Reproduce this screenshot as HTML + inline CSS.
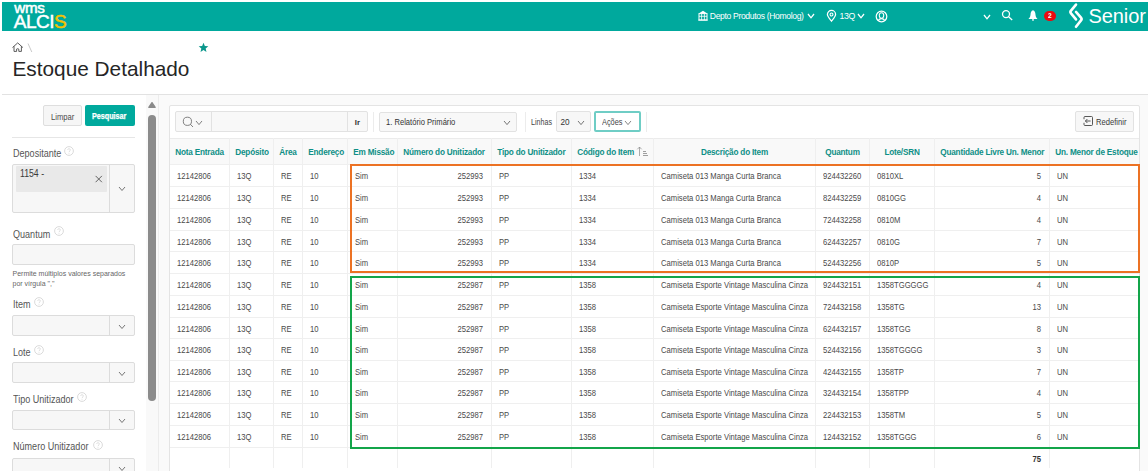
<!DOCTYPE html>
<html><head><meta charset="utf-8"><title>Estoque Detalhado</title>
<style>
*{box-sizing:border-box;margin:0;padding:0}
html,body{width:1148px;height:475px;overflow:hidden;background:#fff;font-family:"Liberation Sans",sans-serif}
body{position:relative}
.a{position:absolute}
.t{position:absolute;white-space:nowrap;line-height:1}
svg{overflow:visible}
</style></head><body>
<div class="a" style="left:2px;top:2px;width:1146px;height:29px;background:#00a99d"></div>
<div class="t" style="left:14.3px;top:-0.17px;font-size:15.2px;color:#fff;font-weight:normal;letter-spacing:-0.3px;-webkit-text-stroke:0.5px #fff">wms</div>
<div class="t" style="left:13.8px;top:12.12px;font-size:19px;color:#fff;font-weight:normal;letter-spacing:-0.5px;-webkit-text-stroke:0.5px #fff">ALCI<span style="color:#f6c200;-webkit-text-stroke:0.5px #f6c200">S</span></div>
<svg class="a" style="left:698px;top:10px" width="10" height="11" viewBox="0 0 10 11">
<path d="M5 0.8 L1.5 3 V3.6 H8.5 V3 Z" fill="#fff"/>
<rect x="1" y="3.6" width="8" height="6.4" fill="none" stroke="#fff" stroke-width="1"/>
<path d="M1 6.3 H9 M3.6 3.6 V10 M6.4 3.6 V10" stroke="#fff" stroke-width="0.8"/>
<rect x="0.3" y="9.6" width="9.4" height="1" fill="#fff"/>
</svg>
<div class="t" style="left:709.8px;top:12.42px;font-size:8.6px;color:#fff;font-weight:normal;letter-spacing:-0.35px;">Depto Produtos (Homolog)</div>
<svg class="a" style="left:807px;top:13.2px" width="8" height="5.8" viewBox="-1 -1 8 5.8"><path d="M0 0 L3.0 3.8 L6 0" fill="none" stroke="#fff" stroke-width="1.3"/></svg>
<svg class="a" style="left:826px;top:9.5px" width="11" height="12" viewBox="0 0 11 12">
<path d="M5.5 11.2 C3 8 1.4 6.2 1.4 4.5 A4.1 4.1 0 0 1 9.6 4.5 C9.6 6.2 8 8 5.5 11.2 Z" fill="none" stroke="#fff" stroke-width="1.25"/>
<circle cx="5.5" cy="4.5" r="1.45" fill="none" stroke="#fff" stroke-width="1.1"/>
</svg>
<div class="t" style="left:839.5px;top:12.35px;font-size:8.8px;color:#fff;font-weight:normal;letter-spacing:-0.4px;">13Q</div>
<svg class="a" style="left:856.5px;top:13.2px" width="8" height="5.8" viewBox="-1 -1 8 5.8"><path d="M0 0 L3.0 3.8 L6 0" fill="none" stroke="#fff" stroke-width="1.3"/></svg>
<svg class="a" style="left:874.5px;top:9.5px" width="13" height="13" viewBox="0 0 13 13">
<circle cx="6.5" cy="6.5" r="5.3" fill="none" stroke="#fff" stroke-width="1.25"/>
<path d="M6.5 2.8 C4.6 2.8 4.2 4.4 4.3 5.8 C4.4 7.2 5.3 8.3 6.5 8.3 C7.7 8.3 8.6 7.2 8.7 5.8 C8.8 4.4 8.4 2.8 6.5 2.8 Z" fill="none" stroke="#fff" stroke-width="1.1"/>
<path d="M3.2 10.4 C4 9 5 8.6 6.5 8.6 C8 8.6 9 9 9.8 10.4" fill="none" stroke="#fff" stroke-width="1.1"/>
</svg>
<svg class="a" style="left:983px;top:13.6px" width="8" height="5.8" viewBox="-1 -1 8 5.8"><path d="M0 0 L3.0 3.8 L6 0" fill="none" stroke="#fff" stroke-width="1.3"/></svg>
<svg class="a" style="left:1001px;top:9px" width="13" height="13" viewBox="0 0 13 13">
<circle cx="5" cy="5.1" r="3.5" fill="none" stroke="#fff" stroke-width="1.3"/>
<path d="M7.6 7.7 L11.2 10.9" stroke="#fff" stroke-width="1.3"/>
</svg>
<svg class="a" style="left:1028px;top:10px" width="10" height="12" viewBox="0 0 10 12">
<path d="M5 0.3 C3.4 0.9 2.6 2.4 2.5 4.8 C2.4 6.8 1.6 7.9 0.5 8.9 H9.5 C8.4 7.9 7.6 6.8 7.5 4.8 C7.4 2.4 6.6 0.9 5 0.3 Z" fill="#fff"/>
<rect x="4.3" y="9" width="1.4" height="1.8" fill="#fff"/>
</svg>
<div class="a" style="left:1044px;top:10.6px;width:12px;height:10.5px;background:#ea0a10;border-radius:6px"></div>
<div class="t" style="left:1047.6px;top:12.40px;font-size:7.8px;color:#fff;font-weight:bold;letter-spacing:0px;transform:scaleX(0.85);transform-origin:0 0;">2</div>
<svg class="a" style="left:1068px;top:3px" width="16" height="26" viewBox="0 0 16 26">
<path d="M8 1.6 L3 7.6 Q1.8 9 3 10.4 L8 16.4" fill="none" stroke="#fff" stroke-width="2.6" stroke-linecap="round"/>
<path d="M8 8.9 L13 14.6 Q14.2 16 13 17.4 L8 23.8" fill="none" stroke="#fff" stroke-width="2.6" stroke-linecap="round"/>
</svg>
<div class="t" style="left:1088.5px;top:6.37px;font-size:20px;color:#fff;font-weight:normal;letter-spacing:-0.1px;">Senior</div>
<svg class="a" style="left:12px;top:42px" width="12" height="11" viewBox="0 0 12 11">
<path d="M0.8 5.3 L5.7 0.9 L10.6 5.3" fill="none" stroke="#4a4a4a" stroke-width="0.9" stroke-linecap="round"/>
<path d="M2 4.3 V9.4 H4.6 V7.1 Q5.7 6.3 6.8 7.1 V9.4 H9.4 V4.3" fill="none" stroke="#4a4a4a" stroke-width="0.9"/>
</svg>
<svg class="a" style="left:27px;top:43px" width="6" height="10" viewBox="0 0 6 10"><path d="M1 0.5 L4.8 9" stroke="#bbb" stroke-width="0.8"/></svg>
<svg class="a" style="left:197.5px;top:41.5px" width="11" height="11" viewBox="0 0 24 24">
<path d="M12 1.5 L14.9 8.6 L22.5 9.2 L16.7 14.1 L18.5 21.6 L12 17.6 L5.5 21.6 L7.3 14.1 L1.5 9.2 L9.1 8.6 Z" fill="#0b978c"/>
</svg>
<div class="t" style="left:12.5px;top:58.69px;font-size:20.8px;color:#262626;font-weight:normal;letter-spacing:0px;">Estoque Detalhado</div>
<div class="a" style="left:2px;top:94px;width:1146px;height:1px;background:#e2e2e2"></div>
<div class="a" style="left:146px;top:95px;width:12px;height:376px;background:#f9f9f9"></div>
<div class="a" style="left:158px;top:95px;width:1px;height:376px;background:#ececec"></div>
<div class="a" style="left:159px;top:95px;width:989px;height:376px;background:#fafafa"></div>
<svg class="a" style="left:147px;top:101px" width="10" height="8" viewBox="0 0 10 8"><path d="M1.8 6.3 L5 1.6 L8.2 6.3 Z" fill="#8a8a8a" stroke="#8a8a8a" stroke-width="1.3" stroke-linejoin="round"/></svg>
<div class="a" style="left:148px;top:115px;width:8px;height:286px;background:#8b8b8b;border-radius:4px"></div>
<div class="a" style="left:43px;top:105px;width:39px;height:21px;background:#f6f6f6;border:1px solid #dedede;border-radius:2px"></div>
<div class="t" style="left:50.6px;top:112.57px;font-size:8.3px;color:#4a4a4a;font-weight:normal;letter-spacing:0px;transform:scaleX(0.92);transform-origin:0 0;">Limpar</div>
<div class="a" style="left:84.5px;top:105px;width:50.5px;height:21px;background:#00a99d;border-radius:2px"></div>
<div class="t" style="left:92.2px;top:112.19px;font-size:8.4px;color:#fff;font-weight:bold;letter-spacing:0px;transform:scaleX(0.857);transform-origin:0 0;-webkit-text-stroke:0.25px #fff">Pesquisar</div>
<div class="a" style="left:12px;top:136.5px;width:123px;height:1px;background:#e6e6e6"></div>
<div class="t" style="left:12.6px;top:148.94px;font-size:10px;color:#555555;font-weight:normal;letter-spacing:0px;transform:scaleX(0.905);transform-origin:0 0;">Depositante</div>
<svg class="a" style="left:63.8px;top:145.5px" width="10" height="10" viewBox="0 0 10 10"><circle cx="5" cy="5" r="4.4" fill="none" stroke="#d2d2d2" stroke-width="0.8"/><path d="M3.6 3.9 C3.6 2.3 6.4 2.3 6.4 3.9 C6.4 5 5 5 5 6.2" fill="none" stroke="#d2d2d2" stroke-width="0.7"/><circle cx="5" cy="7.5" r="0.45" fill="#d2d2d2"/></svg>
<div class="a" style="left:12px;top:163.5px;width:123px;height:49px;background:#f7f7f7;border:1px solid #dcdcdc;border-radius:2px"></div>
<div class="a" style="left:109px;top:164px;width:1px;height:48px;background:#dcdcdc"></div>
<div class="a" style="left:16px;top:166px;width:91px;height:25.5px;background:#e9e9e9;border-radius:1px"></div>
<div class="t" style="left:19.6px;top:168.73px;font-size:10px;color:#3a3a3a;font-weight:normal;letter-spacing:0px;transform:scaleX(0.87);transform-origin:0 0;">1154 -</div>
<svg class="a" style="left:95px;top:175px" width="8" height="8" viewBox="0 0 8 8"><path d="M0.6 0.9 L6.9 7.2 M6.9 0.9 L0.6 7.2" stroke="#555" stroke-width="0.9"/></svg>
<svg class="a" style="left:118.4px;top:186.4px" width="8" height="5.5" viewBox="-1 -1 8 5.5"><path d="M0 0 L3.0 3.5 L6 0" fill="none" stroke="#666" stroke-width="0.9"/></svg>
<div class="t" style="left:12.6px;top:229.53px;font-size:10px;color:#555555;font-weight:normal;letter-spacing:0px;transform:scaleX(0.905);transform-origin:0 0;">Quantum</div>
<svg class="a" style="left:53.6px;top:226px" width="10" height="10" viewBox="0 0 10 10"><circle cx="5" cy="5" r="4.4" fill="none" stroke="#d2d2d2" stroke-width="0.8"/><path d="M3.6 3.9 C3.6 2.3 6.4 2.3 6.4 3.9 C6.4 5 5 5 5 6.2" fill="none" stroke="#d2d2d2" stroke-width="0.7"/><circle cx="5" cy="7.5" r="0.45" fill="#d2d2d2"/></svg>
<div class="a" style="left:12px;top:244px;width:123px;height:20.5px;background:#f7f7f7;border:1px solid #dcdcdc;border-radius:2px"></div>
<div class="t" style="left:12.5px;top:269.67px;font-size:7.0px;color:#666;font-weight:normal;letter-spacing:0px;">Permite múltiplos valores separados</div>
<div class="t" style="left:12.5px;top:280.07px;font-size:7.0px;color:#666;font-weight:normal;letter-spacing:0px;">por vírgula ","</div>
<div class="t" style="left:12.6px;top:299.84px;font-size:10px;color:#555555;font-weight:normal;letter-spacing:0px;transform:scaleX(0.905);transform-origin:0 0;">Item</div>
<svg class="a" style="left:33.7px;top:297px" width="10" height="10" viewBox="0 0 10 10"><circle cx="5" cy="5" r="4.4" fill="none" stroke="#d2d2d2" stroke-width="0.8"/><path d="M3.6 3.9 C3.6 2.3 6.4 2.3 6.4 3.9 C6.4 5 5 5 5 6.2" fill="none" stroke="#d2d2d2" stroke-width="0.7"/><circle cx="5" cy="7.5" r="0.45" fill="#d2d2d2"/></svg>
<div class="a" style="left:12px;top:315px;width:123px;height:20.8px;background:#f7f7f7;border:1px solid #dcdcdc;border-radius:2px"></div><div class="a" style="left:109px;top:315.5px;width:1px;height:19.8px;background:#dcdcdc"></div><svg class="a" style="left:118.4px;top:323.8px" width="8" height="5.5" viewBox="-1 -1 8 5.5"><path d="M0 0 L3.0 3.5 L6 0" fill="none" stroke="#666" stroke-width="0.9"/></svg>
<div class="t" style="left:12.6px;top:347.84px;font-size:10px;color:#555555;font-weight:normal;letter-spacing:0px;transform:scaleX(0.905);transform-origin:0 0;">Lote</div>
<svg class="a" style="left:33.5px;top:344.5px" width="10" height="10" viewBox="0 0 10 10"><circle cx="5" cy="5" r="4.4" fill="none" stroke="#d2d2d2" stroke-width="0.8"/><path d="M3.6 3.9 C3.6 2.3 6.4 2.3 6.4 3.9 C6.4 5 5 5 5 6.2" fill="none" stroke="#d2d2d2" stroke-width="0.7"/><circle cx="5" cy="7.5" r="0.45" fill="#d2d2d2"/></svg>
<div class="a" style="left:12px;top:362px;width:123px;height:20.8px;background:#f7f7f7;border:1px solid #dcdcdc;border-radius:2px"></div><div class="a" style="left:109px;top:362.5px;width:1px;height:19.8px;background:#dcdcdc"></div><svg class="a" style="left:118.4px;top:370.8px" width="8" height="5.5" viewBox="-1 -1 8 5.5"><path d="M0 0 L3.0 3.5 L6 0" fill="none" stroke="#666" stroke-width="0.9"/></svg>
<div class="t" style="left:12.6px;top:394.54px;font-size:10px;color:#555555;font-weight:normal;letter-spacing:0px;transform:scaleX(0.905);transform-origin:0 0;">Tipo Unitizador</div>
<svg class="a" style="left:77px;top:392px" width="10" height="10" viewBox="0 0 10 10"><circle cx="5" cy="5" r="4.4" fill="none" stroke="#d2d2d2" stroke-width="0.8"/><path d="M3.6 3.9 C3.6 2.3 6.4 2.3 6.4 3.9 C6.4 5 5 5 5 6.2" fill="none" stroke="#d2d2d2" stroke-width="0.7"/><circle cx="5" cy="7.5" r="0.45" fill="#d2d2d2"/></svg>
<div class="a" style="left:12px;top:409.5px;width:123px;height:20.8px;background:#f7f7f7;border:1px solid #dcdcdc;border-radius:2px"></div><div class="a" style="left:109px;top:410.0px;width:1px;height:19.8px;background:#dcdcdc"></div><svg class="a" style="left:118.4px;top:418.3px" width="8" height="5.5" viewBox="-1 -1 8 5.5"><path d="M0 0 L3.0 3.5 L6 0" fill="none" stroke="#666" stroke-width="0.9"/></svg>
<div class="t" style="left:12.6px;top:442.14px;font-size:10px;color:#555555;font-weight:normal;letter-spacing:0px;transform:scaleX(0.905);transform-origin:0 0;">Número Unitizador</div>
<svg class="a" style="left:92.6px;top:440px" width="10" height="10" viewBox="0 0 10 10"><circle cx="5" cy="5" r="4.4" fill="none" stroke="#d2d2d2" stroke-width="0.8"/><path d="M3.6 3.9 C3.6 2.3 6.4 2.3 6.4 3.9 C6.4 5 5 5 5 6.2" fill="none" stroke="#d2d2d2" stroke-width="0.7"/><circle cx="5" cy="7.5" r="0.45" fill="#d2d2d2"/></svg>
<div class="a" style="left:12px;top:457.5px;width:123px;height:22px;background:#f7f7f7;border:1px solid #dcdcdc;border-radius:2px"></div><div class="a" style="left:109px;top:458.0px;width:1px;height:21px;background:#dcdcdc"></div><svg class="a" style="left:118.4px;top:466.3px" width="8" height="5.5" viewBox="-1 -1 8 5.5"><path d="M0 0 L3.0 3.5 L6 0" fill="none" stroke="#666" stroke-width="0.9"/></svg>
<div class="a" style="left:169px;top:105px;width:971px;height:380px;background:#fff;border:1px solid #e4e4e4;border-radius:2px"></div>
<div class="a" style="left:175px;top:111px;width:193px;height:21px;background:#f8f8f8;border:1px solid #e2e2e2;border-radius:2px"></div>
<div class="a" style="left:210.5px;top:111.5px;width:1px;height:20px;background:#e2e2e2"></div>
<div class="a" style="left:347px;top:111.5px;width:1px;height:20px;background:#e2e2e2"></div>
<svg class="a" style="left:181.5px;top:115.5px" width="13" height="13" viewBox="0 0 13 13">
<circle cx="5.4" cy="5.3" r="4.1" fill="none" stroke="#6a6a6a" stroke-width="0.85"/>
<path d="M8.3 8.2 L11 11" stroke="#6a6a6a" stroke-width="0.85"/>
</svg>
<svg class="a" style="left:194.9px;top:119.6px" width="8" height="5.6" viewBox="-1 -1 8 5.6"><path d="M0 0 L3.0 3.6 L6 0" fill="none" stroke="#6a6a6a" stroke-width="0.85"/></svg>
<div class="t" style="left:354.8px;top:118.80px;font-size:7.8px;color:#333;font-weight:bold;letter-spacing:0px;">Ir</div>
<div class="a" style="left:373px;top:112px;width:1px;height:20px;background:#ececec"></div>
<div class="a" style="left:379px;top:111.5px;width:138px;height:20px;background:#f8f8f8;border:1px solid #e2e2e2;border-radius:2px"></div>
<div class="t" style="left:385.5px;top:117.98px;font-size:9.0px;color:#333;font-weight:normal;letter-spacing:0px;transform:scaleX(0.845);transform-origin:0 0;">1. Relatório Primário</div>
<svg class="a" style="left:503px;top:120px" width="8" height="5.6" viewBox="-1 -1 8 5.6"><path d="M0 0 L3.0 3.6 L6 0" fill="none" stroke="#666" stroke-width="0.9"/></svg>
<div class="a" style="left:525px;top:112px;width:1px;height:20px;background:#ececec"></div>
<div class="t" style="left:531.2px;top:118.56px;font-size:8.2px;color:#454545;font-weight:normal;letter-spacing:0px;transform:scaleX(0.87);transform-origin:0 0;">Linhas</div>
<div class="a" style="left:555.5px;top:111.3px;width:35.5px;height:20.3px;background:#f7f7f7;border:1px solid #e2e2e2;border-radius:2px"></div>
<div class="t" style="left:560.6px;top:118.96px;font-size:8.2px;color:#333;font-weight:normal;letter-spacing:-0.2px;">20</div>
<svg class="a" style="left:577px;top:120px" width="8" height="5.6" viewBox="-1 -1 8 5.6"><path d="M0 0 L3.0 3.6 L6 0" fill="none" stroke="#666" stroke-width="0.9"/></svg>
<div class="a" style="left:593.5px;top:111px;width:47.5px;height:21.2px;background:#fff;border:2px solid #6fcdc5;border-radius:2px"></div>
<div class="t" style="left:601.5px;top:117.98px;font-size:9.0px;color:#444;font-weight:normal;letter-spacing:0px;transform:scaleX(0.82);transform-origin:0 0;">Ações</div>
<svg class="a" style="left:624.2px;top:119.6px" width="8" height="5.6" viewBox="-1 -1 8 5.6"><path d="M0 0 L3.0 3.6 L6 0" fill="none" stroke="#777" stroke-width="0.9"/></svg>
<div class="a" style="left:646px;top:112px;width:1px;height:20px;background:#ececec"></div>
<div class="a" style="left:1075px;top:111px;width:59px;height:20.6px;background:#f7f7f7;border:1px solid #e2e2e2;border-radius:2px"></div>
<svg class="a" style="left:1083px;top:116px" width="10" height="10" viewBox="0 0 10 10">
<path d="M1 3.2 V1.5 Q1 0.5 2 0.5 H8.5 Q9.5 0.5 9.5 1.5 V8.5 Q9.5 9.5 8.5 9.5 H2 Q1 9.5 1 8.5 V6.8" fill="none" stroke="#444" stroke-width="0.9"/>
<path d="M7.6 5 H2.4 M4.4 3 L2.4 5 L4.4 7" fill="none" stroke="#444" stroke-width="0.9"/>
</svg>
<div class="t" style="left:1096.0px;top:118.18px;font-size:9.0px;color:#3a3a3a;font-weight:normal;letter-spacing:0px;transform:scaleX(0.847);transform-origin:0 0;">Redefinir</div>
<div class="a" style="left:170px;top:138px;width:969px;height:26px;background:#f9f9f9"></div>
<div class="a" style="left:170px;top:138px;width:969px;height:1px;background:#ebebeb"></div>
<div class="a" style="left:170px;top:164px;width:969px;height:1px;background:#efefef"></div>
<div class="a" style="left:170px;top:186px;width:969px;height:1px;background:#efefef"></div>
<div class="a" style="left:170px;top:208px;width:969px;height:1px;background:#efefef"></div>
<div class="a" style="left:170px;top:230px;width:969px;height:1px;background:#efefef"></div>
<div class="a" style="left:170px;top:251px;width:969px;height:1px;background:#efefef"></div>
<div class="a" style="left:170px;top:273px;width:969px;height:1px;background:#efefef"></div>
<div class="a" style="left:170px;top:295px;width:969px;height:1px;background:#efefef"></div>
<div class="a" style="left:170px;top:317px;width:969px;height:1px;background:#efefef"></div>
<div class="a" style="left:170px;top:338px;width:969px;height:1px;background:#efefef"></div>
<div class="a" style="left:170px;top:360px;width:969px;height:1px;background:#efefef"></div>
<div class="a" style="left:170px;top:381px;width:969px;height:1px;background:#efefef"></div>
<div class="a" style="left:170px;top:403px;width:969px;height:1px;background:#efefef"></div>
<div class="a" style="left:170px;top:425px;width:969px;height:1px;background:#efefef"></div>
<div class="a" style="left:170px;top:447px;width:969px;height:1px;background:#efefef"></div>
<div class="a" style="left:229px;top:138px;width:1px;height:330px;background:#efefef"></div>
<div class="a" style="left:273px;top:138px;width:1px;height:330px;background:#efefef"></div>
<div class="a" style="left:302px;top:138px;width:1px;height:330px;background:#efefef"></div>
<div class="a" style="left:347px;top:138px;width:1px;height:330px;background:#efefef"></div>
<div class="a" style="left:397px;top:138px;width:1px;height:330px;background:#efefef"></div>
<div class="a" style="left:491px;top:138px;width:1px;height:330px;background:#efefef"></div>
<div class="a" style="left:571px;top:138px;width:1px;height:330px;background:#efefef"></div>
<div class="a" style="left:653px;top:138px;width:1px;height:330px;background:#efefef"></div>
<div class="a" style="left:815px;top:138px;width:1px;height:330px;background:#efefef"></div>
<div class="a" style="left:869px;top:138px;width:1px;height:330px;background:#efefef"></div>
<div class="a" style="left:934px;top:138px;width:1px;height:330px;background:#efefef"></div>
<div class="a" style="left:1049px;top:138px;width:1px;height:330px;background:#efefef"></div>
<div class="t" style="left:175.3px;top:148.66px;font-size:8.2px;color:#0e8f86;font-weight:bold;letter-spacing:-0.2px;">Nota Entrada</div>
<div class="t" style="left:235.3px;top:148.66px;font-size:8.2px;color:#0e8f86;font-weight:bold;letter-spacing:-0.2px;">Depósito</div>
<div class="t" style="left:279.3px;top:148.66px;font-size:8.2px;color:#0e8f86;font-weight:bold;letter-spacing:-0.2px;">Área</div>
<div class="t" style="left:308.3px;top:148.66px;font-size:8.2px;color:#0e8f86;font-weight:bold;letter-spacing:-0.2px;">Endereço</div>
<div class="t" style="left:353.3px;top:148.66px;font-size:8.2px;color:#0e8f86;font-weight:bold;letter-spacing:-0.2px;">Em Missão</div>
<div class="t" style="left:403.3px;top:148.66px;font-size:8.2px;color:#0e8f86;font-weight:bold;letter-spacing:-0.2px;">Número do Unitizador</div>
<div class="t" style="left:497.3px;top:148.66px;font-size:8.2px;color:#0e8f86;font-weight:bold;letter-spacing:-0.2px;">Tipo do Unitizador</div>
<div class="t" style="left:577.3px;top:148.66px;font-size:8.2px;color:#0e8f86;font-weight:bold;letter-spacing:-0.2px;">Código do Item</div>
<div class="t" style="left:584.5px;width:300px;top:148.66px;font-size:8.2px;color:#0e8f86;font-weight:bold;letter-spacing:-0.2px;text-align:center;">Descrição do Item</div>
<div class="t" style="left:692.5px;width:300px;top:148.66px;font-size:8.2px;color:#0e8f86;font-weight:bold;letter-spacing:-0.2px;text-align:center;">Quantum</div>
<div class="t" style="left:752.0px;width:300px;top:148.66px;font-size:8.2px;color:#0e8f86;font-weight:bold;letter-spacing:-0.2px;text-align:center;">Lote/SRN</div>
<div class="t" style="left:940.3px;top:148.66px;font-size:8.2px;color:#0e8f86;font-weight:bold;letter-spacing:-0.2px;">Quantidade Livre Un. Menor</div>
<div class="t" style="left:1055.3px;top:148.66px;font-size:8.2px;color:#0e8f86;font-weight:bold;letter-spacing:-0.2px;">Un. Menor de Estoque</div>
<svg class="a" style="left:636px;top:147px" width="13" height="10" viewBox="0 0 13 10">
<path d="M3.5 9 V0 M1.3 2.3 L3.5 0 L5.7 2.3" fill="none" stroke="#8a8a8a" stroke-width="0.7"/>
<path d="M7 4.5 H10 M7 6.5 H11 M7 8.5 H12" stroke="#888" stroke-width="0.8"/>
</svg>
<div class="t" style="left:177.3px;top:171.78px;font-size:9.0px;color:#4a4a4a;font-weight:normal;letter-spacing:0px;transform:scaleX(0.85);transform-origin:0 0;">12142806</div>
<div class="t" style="left:237.3px;top:171.78px;font-size:9.0px;color:#4a4a4a;font-weight:normal;letter-spacing:0px;transform:scaleX(0.85);transform-origin:0 0;">13Q</div>
<div class="t" style="left:281.3px;top:171.78px;font-size:9.0px;color:#4a4a4a;font-weight:normal;letter-spacing:0px;transform:scaleX(0.85);transform-origin:0 0;">RE</div>
<div class="t" style="left:310.3px;top:171.78px;font-size:9.0px;color:#4a4a4a;font-weight:normal;letter-spacing:0px;transform:scaleX(0.85);transform-origin:0 0;">10</div>
<div class="t" style="left:355.3px;top:171.78px;font-size:9.0px;color:#4a4a4a;font-weight:normal;letter-spacing:0px;transform:scaleX(0.85);transform-origin:0 0;">Sim</div>
<div class="t" style="right:665.0px;top:171.78px;font-size:9.0px;color:#4a4a4a;font-weight:normal;letter-spacing:0px;text-align:right;transform:scaleX(0.85);transform-origin:100% 0;">252993</div>
<div class="t" style="left:499.3px;top:171.78px;font-size:9.0px;color:#4a4a4a;font-weight:normal;letter-spacing:0px;transform:scaleX(0.85);transform-origin:0 0;">PP</div>
<div class="t" style="left:579.3px;top:171.78px;font-size:9.0px;color:#4a4a4a;font-weight:normal;letter-spacing:0px;transform:scaleX(0.85);transform-origin:0 0;">1334</div>
<div class="t" style="left:661.3px;top:171.78px;font-size:9.0px;color:#4a4a4a;font-weight:normal;letter-spacing:0px;transform:scaleX(0.85);transform-origin:0 0;">Camiseta 013 Manga Curta Branca</div>
<div class="t" style="left:823.3px;top:171.78px;font-size:9.0px;color:#4a4a4a;font-weight:normal;letter-spacing:0px;transform:scaleX(0.85);transform-origin:0 0;">924432260</div>
<div class="t" style="left:877.3px;top:171.78px;font-size:9.0px;color:#4a4a4a;font-weight:normal;letter-spacing:0px;transform:scaleX(0.85);transform-origin:0 0;">0810XL</div>
<div class="t" style="right:107.0px;top:171.78px;font-size:9.0px;color:#4a4a4a;font-weight:normal;letter-spacing:0px;text-align:right;transform:scaleX(0.85);transform-origin:100% 0;">5</div>
<div class="t" style="left:1057.3px;top:171.78px;font-size:9.0px;color:#4a4a4a;font-weight:normal;letter-spacing:0px;transform:scaleX(0.85);transform-origin:0 0;">UN</div>
<div class="t" style="left:177.3px;top:193.78px;font-size:9.0px;color:#4a4a4a;font-weight:normal;letter-spacing:0px;transform:scaleX(0.85);transform-origin:0 0;">12142806</div>
<div class="t" style="left:237.3px;top:193.78px;font-size:9.0px;color:#4a4a4a;font-weight:normal;letter-spacing:0px;transform:scaleX(0.85);transform-origin:0 0;">13Q</div>
<div class="t" style="left:281.3px;top:193.78px;font-size:9.0px;color:#4a4a4a;font-weight:normal;letter-spacing:0px;transform:scaleX(0.85);transform-origin:0 0;">RE</div>
<div class="t" style="left:310.3px;top:193.78px;font-size:9.0px;color:#4a4a4a;font-weight:normal;letter-spacing:0px;transform:scaleX(0.85);transform-origin:0 0;">10</div>
<div class="t" style="left:355.3px;top:193.78px;font-size:9.0px;color:#4a4a4a;font-weight:normal;letter-spacing:0px;transform:scaleX(0.85);transform-origin:0 0;">Sim</div>
<div class="t" style="right:665.0px;top:193.78px;font-size:9.0px;color:#4a4a4a;font-weight:normal;letter-spacing:0px;text-align:right;transform:scaleX(0.85);transform-origin:100% 0;">252993</div>
<div class="t" style="left:499.3px;top:193.78px;font-size:9.0px;color:#4a4a4a;font-weight:normal;letter-spacing:0px;transform:scaleX(0.85);transform-origin:0 0;">PP</div>
<div class="t" style="left:579.3px;top:193.78px;font-size:9.0px;color:#4a4a4a;font-weight:normal;letter-spacing:0px;transform:scaleX(0.85);transform-origin:0 0;">1334</div>
<div class="t" style="left:661.3px;top:193.78px;font-size:9.0px;color:#4a4a4a;font-weight:normal;letter-spacing:0px;transform:scaleX(0.85);transform-origin:0 0;">Camiseta 013 Manga Curta Branca</div>
<div class="t" style="left:823.3px;top:193.78px;font-size:9.0px;color:#4a4a4a;font-weight:normal;letter-spacing:0px;transform:scaleX(0.85);transform-origin:0 0;">824432259</div>
<div class="t" style="left:877.3px;top:193.78px;font-size:9.0px;color:#4a4a4a;font-weight:normal;letter-spacing:0px;transform:scaleX(0.85);transform-origin:0 0;">0810GG</div>
<div class="t" style="right:107.0px;top:193.78px;font-size:9.0px;color:#4a4a4a;font-weight:normal;letter-spacing:0px;text-align:right;transform:scaleX(0.85);transform-origin:100% 0;">4</div>
<div class="t" style="left:1057.3px;top:193.78px;font-size:9.0px;color:#4a4a4a;font-weight:normal;letter-spacing:0px;transform:scaleX(0.85);transform-origin:0 0;">UN</div>
<div class="t" style="left:177.3px;top:215.78px;font-size:9.0px;color:#4a4a4a;font-weight:normal;letter-spacing:0px;transform:scaleX(0.85);transform-origin:0 0;">12142806</div>
<div class="t" style="left:237.3px;top:215.78px;font-size:9.0px;color:#4a4a4a;font-weight:normal;letter-spacing:0px;transform:scaleX(0.85);transform-origin:0 0;">13Q</div>
<div class="t" style="left:281.3px;top:215.78px;font-size:9.0px;color:#4a4a4a;font-weight:normal;letter-spacing:0px;transform:scaleX(0.85);transform-origin:0 0;">RE</div>
<div class="t" style="left:310.3px;top:215.78px;font-size:9.0px;color:#4a4a4a;font-weight:normal;letter-spacing:0px;transform:scaleX(0.85);transform-origin:0 0;">10</div>
<div class="t" style="left:355.3px;top:215.78px;font-size:9.0px;color:#4a4a4a;font-weight:normal;letter-spacing:0px;transform:scaleX(0.85);transform-origin:0 0;">Sim</div>
<div class="t" style="right:665.0px;top:215.78px;font-size:9.0px;color:#4a4a4a;font-weight:normal;letter-spacing:0px;text-align:right;transform:scaleX(0.85);transform-origin:100% 0;">252993</div>
<div class="t" style="left:499.3px;top:215.78px;font-size:9.0px;color:#4a4a4a;font-weight:normal;letter-spacing:0px;transform:scaleX(0.85);transform-origin:0 0;">PP</div>
<div class="t" style="left:579.3px;top:215.78px;font-size:9.0px;color:#4a4a4a;font-weight:normal;letter-spacing:0px;transform:scaleX(0.85);transform-origin:0 0;">1334</div>
<div class="t" style="left:661.3px;top:215.78px;font-size:9.0px;color:#4a4a4a;font-weight:normal;letter-spacing:0px;transform:scaleX(0.85);transform-origin:0 0;">Camiseta 013 Manga Curta Branca</div>
<div class="t" style="left:823.3px;top:215.78px;font-size:9.0px;color:#4a4a4a;font-weight:normal;letter-spacing:0px;transform:scaleX(0.85);transform-origin:0 0;">724432258</div>
<div class="t" style="left:877.3px;top:215.78px;font-size:9.0px;color:#4a4a4a;font-weight:normal;letter-spacing:0px;transform:scaleX(0.85);transform-origin:0 0;">0810M</div>
<div class="t" style="right:107.0px;top:215.78px;font-size:9.0px;color:#4a4a4a;font-weight:normal;letter-spacing:0px;text-align:right;transform:scaleX(0.85);transform-origin:100% 0;">4</div>
<div class="t" style="left:1057.3px;top:215.78px;font-size:9.0px;color:#4a4a4a;font-weight:normal;letter-spacing:0px;transform:scaleX(0.85);transform-origin:0 0;">UN</div>
<div class="t" style="left:177.3px;top:237.78px;font-size:9.0px;color:#4a4a4a;font-weight:normal;letter-spacing:0px;transform:scaleX(0.85);transform-origin:0 0;">12142806</div>
<div class="t" style="left:237.3px;top:237.78px;font-size:9.0px;color:#4a4a4a;font-weight:normal;letter-spacing:0px;transform:scaleX(0.85);transform-origin:0 0;">13Q</div>
<div class="t" style="left:281.3px;top:237.78px;font-size:9.0px;color:#4a4a4a;font-weight:normal;letter-spacing:0px;transform:scaleX(0.85);transform-origin:0 0;">RE</div>
<div class="t" style="left:310.3px;top:237.78px;font-size:9.0px;color:#4a4a4a;font-weight:normal;letter-spacing:0px;transform:scaleX(0.85);transform-origin:0 0;">10</div>
<div class="t" style="left:355.3px;top:237.78px;font-size:9.0px;color:#4a4a4a;font-weight:normal;letter-spacing:0px;transform:scaleX(0.85);transform-origin:0 0;">Sim</div>
<div class="t" style="right:665.0px;top:237.78px;font-size:9.0px;color:#4a4a4a;font-weight:normal;letter-spacing:0px;text-align:right;transform:scaleX(0.85);transform-origin:100% 0;">252993</div>
<div class="t" style="left:499.3px;top:237.78px;font-size:9.0px;color:#4a4a4a;font-weight:normal;letter-spacing:0px;transform:scaleX(0.85);transform-origin:0 0;">PP</div>
<div class="t" style="left:579.3px;top:237.78px;font-size:9.0px;color:#4a4a4a;font-weight:normal;letter-spacing:0px;transform:scaleX(0.85);transform-origin:0 0;">1334</div>
<div class="t" style="left:661.3px;top:237.78px;font-size:9.0px;color:#4a4a4a;font-weight:normal;letter-spacing:0px;transform:scaleX(0.85);transform-origin:0 0;">Camiseta 013 Manga Curta Branca</div>
<div class="t" style="left:823.3px;top:237.78px;font-size:9.0px;color:#4a4a4a;font-weight:normal;letter-spacing:0px;transform:scaleX(0.85);transform-origin:0 0;">624432257</div>
<div class="t" style="left:877.3px;top:237.78px;font-size:9.0px;color:#4a4a4a;font-weight:normal;letter-spacing:0px;transform:scaleX(0.85);transform-origin:0 0;">0810G</div>
<div class="t" style="right:107.0px;top:237.78px;font-size:9.0px;color:#4a4a4a;font-weight:normal;letter-spacing:0px;text-align:right;transform:scaleX(0.85);transform-origin:100% 0;">7</div>
<div class="t" style="left:1057.3px;top:237.78px;font-size:9.0px;color:#4a4a4a;font-weight:normal;letter-spacing:0px;transform:scaleX(0.85);transform-origin:0 0;">UN</div>
<div class="t" style="left:177.3px;top:258.78px;font-size:9.0px;color:#4a4a4a;font-weight:normal;letter-spacing:0px;transform:scaleX(0.85);transform-origin:0 0;">12142806</div>
<div class="t" style="left:237.3px;top:258.78px;font-size:9.0px;color:#4a4a4a;font-weight:normal;letter-spacing:0px;transform:scaleX(0.85);transform-origin:0 0;">13Q</div>
<div class="t" style="left:281.3px;top:258.78px;font-size:9.0px;color:#4a4a4a;font-weight:normal;letter-spacing:0px;transform:scaleX(0.85);transform-origin:0 0;">RE</div>
<div class="t" style="left:310.3px;top:258.78px;font-size:9.0px;color:#4a4a4a;font-weight:normal;letter-spacing:0px;transform:scaleX(0.85);transform-origin:0 0;">10</div>
<div class="t" style="left:355.3px;top:258.78px;font-size:9.0px;color:#4a4a4a;font-weight:normal;letter-spacing:0px;transform:scaleX(0.85);transform-origin:0 0;">Sim</div>
<div class="t" style="right:665.0px;top:258.78px;font-size:9.0px;color:#4a4a4a;font-weight:normal;letter-spacing:0px;text-align:right;transform:scaleX(0.85);transform-origin:100% 0;">252993</div>
<div class="t" style="left:499.3px;top:258.78px;font-size:9.0px;color:#4a4a4a;font-weight:normal;letter-spacing:0px;transform:scaleX(0.85);transform-origin:0 0;">PP</div>
<div class="t" style="left:579.3px;top:258.78px;font-size:9.0px;color:#4a4a4a;font-weight:normal;letter-spacing:0px;transform:scaleX(0.85);transform-origin:0 0;">1334</div>
<div class="t" style="left:661.3px;top:258.78px;font-size:9.0px;color:#4a4a4a;font-weight:normal;letter-spacing:0px;transform:scaleX(0.85);transform-origin:0 0;">Camiseta 013 Manga Curta Branca</div>
<div class="t" style="left:823.3px;top:258.78px;font-size:9.0px;color:#4a4a4a;font-weight:normal;letter-spacing:0px;transform:scaleX(0.85);transform-origin:0 0;">524432256</div>
<div class="t" style="left:877.3px;top:258.78px;font-size:9.0px;color:#4a4a4a;font-weight:normal;letter-spacing:0px;transform:scaleX(0.85);transform-origin:0 0;">0810P</div>
<div class="t" style="right:107.0px;top:258.78px;font-size:9.0px;color:#4a4a4a;font-weight:normal;letter-spacing:0px;text-align:right;transform:scaleX(0.85);transform-origin:100% 0;">5</div>
<div class="t" style="left:1057.3px;top:258.78px;font-size:9.0px;color:#4a4a4a;font-weight:normal;letter-spacing:0px;transform:scaleX(0.85);transform-origin:0 0;">UN</div>
<div class="t" style="left:177.3px;top:280.78px;font-size:9.0px;color:#4a4a4a;font-weight:normal;letter-spacing:0px;transform:scaleX(0.85);transform-origin:0 0;">12142806</div>
<div class="t" style="left:237.3px;top:280.78px;font-size:9.0px;color:#4a4a4a;font-weight:normal;letter-spacing:0px;transform:scaleX(0.85);transform-origin:0 0;">13Q</div>
<div class="t" style="left:281.3px;top:280.78px;font-size:9.0px;color:#4a4a4a;font-weight:normal;letter-spacing:0px;transform:scaleX(0.85);transform-origin:0 0;">RE</div>
<div class="t" style="left:310.3px;top:280.78px;font-size:9.0px;color:#4a4a4a;font-weight:normal;letter-spacing:0px;transform:scaleX(0.85);transform-origin:0 0;">10</div>
<div class="t" style="left:355.3px;top:280.78px;font-size:9.0px;color:#4a4a4a;font-weight:normal;letter-spacing:0px;transform:scaleX(0.85);transform-origin:0 0;">Sim</div>
<div class="t" style="right:665.0px;top:280.78px;font-size:9.0px;color:#4a4a4a;font-weight:normal;letter-spacing:0px;text-align:right;transform:scaleX(0.85);transform-origin:100% 0;">252987</div>
<div class="t" style="left:499.3px;top:280.78px;font-size:9.0px;color:#4a4a4a;font-weight:normal;letter-spacing:0px;transform:scaleX(0.85);transform-origin:0 0;">PP</div>
<div class="t" style="left:579.3px;top:280.78px;font-size:9.0px;color:#4a4a4a;font-weight:normal;letter-spacing:0px;transform:scaleX(0.85);transform-origin:0 0;">1358</div>
<div class="t" style="left:661.3px;top:280.78px;font-size:9.0px;color:#4a4a4a;font-weight:normal;letter-spacing:0px;transform:scaleX(0.85);transform-origin:0 0;">Camiseta Esporte Vintage Masculina Cinza</div>
<div class="t" style="left:823.3px;top:280.78px;font-size:9.0px;color:#4a4a4a;font-weight:normal;letter-spacing:0px;transform:scaleX(0.85);transform-origin:0 0;">924432151</div>
<div class="t" style="left:877.3px;top:280.78px;font-size:9.0px;color:#4a4a4a;font-weight:normal;letter-spacing:0px;transform:scaleX(0.85);transform-origin:0 0;">1358TGGGGG</div>
<div class="t" style="right:107.0px;top:280.78px;font-size:9.0px;color:#4a4a4a;font-weight:normal;letter-spacing:0px;text-align:right;transform:scaleX(0.85);transform-origin:100% 0;">4</div>
<div class="t" style="left:1057.3px;top:280.78px;font-size:9.0px;color:#4a4a4a;font-weight:normal;letter-spacing:0px;transform:scaleX(0.85);transform-origin:0 0;">UN</div>
<div class="t" style="left:177.3px;top:302.78px;font-size:9.0px;color:#4a4a4a;font-weight:normal;letter-spacing:0px;transform:scaleX(0.85);transform-origin:0 0;">12142806</div>
<div class="t" style="left:237.3px;top:302.78px;font-size:9.0px;color:#4a4a4a;font-weight:normal;letter-spacing:0px;transform:scaleX(0.85);transform-origin:0 0;">13Q</div>
<div class="t" style="left:281.3px;top:302.78px;font-size:9.0px;color:#4a4a4a;font-weight:normal;letter-spacing:0px;transform:scaleX(0.85);transform-origin:0 0;">RE</div>
<div class="t" style="left:310.3px;top:302.78px;font-size:9.0px;color:#4a4a4a;font-weight:normal;letter-spacing:0px;transform:scaleX(0.85);transform-origin:0 0;">10</div>
<div class="t" style="left:355.3px;top:302.78px;font-size:9.0px;color:#4a4a4a;font-weight:normal;letter-spacing:0px;transform:scaleX(0.85);transform-origin:0 0;">Sim</div>
<div class="t" style="right:665.0px;top:302.78px;font-size:9.0px;color:#4a4a4a;font-weight:normal;letter-spacing:0px;text-align:right;transform:scaleX(0.85);transform-origin:100% 0;">252987</div>
<div class="t" style="left:499.3px;top:302.78px;font-size:9.0px;color:#4a4a4a;font-weight:normal;letter-spacing:0px;transform:scaleX(0.85);transform-origin:0 0;">PP</div>
<div class="t" style="left:579.3px;top:302.78px;font-size:9.0px;color:#4a4a4a;font-weight:normal;letter-spacing:0px;transform:scaleX(0.85);transform-origin:0 0;">1358</div>
<div class="t" style="left:661.3px;top:302.78px;font-size:9.0px;color:#4a4a4a;font-weight:normal;letter-spacing:0px;transform:scaleX(0.85);transform-origin:0 0;">Camiseta Esporte Vintage Masculina Cinza</div>
<div class="t" style="left:823.3px;top:302.78px;font-size:9.0px;color:#4a4a4a;font-weight:normal;letter-spacing:0px;transform:scaleX(0.85);transform-origin:0 0;">724432158</div>
<div class="t" style="left:877.3px;top:302.78px;font-size:9.0px;color:#4a4a4a;font-weight:normal;letter-spacing:0px;transform:scaleX(0.85);transform-origin:0 0;">1358TG</div>
<div class="t" style="right:107.0px;top:302.78px;font-size:9.0px;color:#4a4a4a;font-weight:normal;letter-spacing:0px;text-align:right;transform:scaleX(0.85);transform-origin:100% 0;">13</div>
<div class="t" style="left:1057.3px;top:302.78px;font-size:9.0px;color:#4a4a4a;font-weight:normal;letter-spacing:0px;transform:scaleX(0.85);transform-origin:0 0;">UN</div>
<div class="t" style="left:177.3px;top:324.78px;font-size:9.0px;color:#4a4a4a;font-weight:normal;letter-spacing:0px;transform:scaleX(0.85);transform-origin:0 0;">12142806</div>
<div class="t" style="left:237.3px;top:324.78px;font-size:9.0px;color:#4a4a4a;font-weight:normal;letter-spacing:0px;transform:scaleX(0.85);transform-origin:0 0;">13Q</div>
<div class="t" style="left:281.3px;top:324.78px;font-size:9.0px;color:#4a4a4a;font-weight:normal;letter-spacing:0px;transform:scaleX(0.85);transform-origin:0 0;">RE</div>
<div class="t" style="left:310.3px;top:324.78px;font-size:9.0px;color:#4a4a4a;font-weight:normal;letter-spacing:0px;transform:scaleX(0.85);transform-origin:0 0;">10</div>
<div class="t" style="left:355.3px;top:324.78px;font-size:9.0px;color:#4a4a4a;font-weight:normal;letter-spacing:0px;transform:scaleX(0.85);transform-origin:0 0;">Sim</div>
<div class="t" style="right:665.0px;top:324.78px;font-size:9.0px;color:#4a4a4a;font-weight:normal;letter-spacing:0px;text-align:right;transform:scaleX(0.85);transform-origin:100% 0;">252987</div>
<div class="t" style="left:499.3px;top:324.78px;font-size:9.0px;color:#4a4a4a;font-weight:normal;letter-spacing:0px;transform:scaleX(0.85);transform-origin:0 0;">PP</div>
<div class="t" style="left:579.3px;top:324.78px;font-size:9.0px;color:#4a4a4a;font-weight:normal;letter-spacing:0px;transform:scaleX(0.85);transform-origin:0 0;">1358</div>
<div class="t" style="left:661.3px;top:324.78px;font-size:9.0px;color:#4a4a4a;font-weight:normal;letter-spacing:0px;transform:scaleX(0.85);transform-origin:0 0;">Camiseta Esporte Vintage Masculina Cinza</div>
<div class="t" style="left:823.3px;top:324.78px;font-size:9.0px;color:#4a4a4a;font-weight:normal;letter-spacing:0px;transform:scaleX(0.85);transform-origin:0 0;">624432157</div>
<div class="t" style="left:877.3px;top:324.78px;font-size:9.0px;color:#4a4a4a;font-weight:normal;letter-spacing:0px;transform:scaleX(0.85);transform-origin:0 0;">1358TGG</div>
<div class="t" style="right:107.0px;top:324.78px;font-size:9.0px;color:#4a4a4a;font-weight:normal;letter-spacing:0px;text-align:right;transform:scaleX(0.85);transform-origin:100% 0;">8</div>
<div class="t" style="left:1057.3px;top:324.78px;font-size:9.0px;color:#4a4a4a;font-weight:normal;letter-spacing:0px;transform:scaleX(0.85);transform-origin:0 0;">UN</div>
<div class="t" style="left:177.3px;top:345.78px;font-size:9.0px;color:#4a4a4a;font-weight:normal;letter-spacing:0px;transform:scaleX(0.85);transform-origin:0 0;">12142806</div>
<div class="t" style="left:237.3px;top:345.78px;font-size:9.0px;color:#4a4a4a;font-weight:normal;letter-spacing:0px;transform:scaleX(0.85);transform-origin:0 0;">13Q</div>
<div class="t" style="left:281.3px;top:345.78px;font-size:9.0px;color:#4a4a4a;font-weight:normal;letter-spacing:0px;transform:scaleX(0.85);transform-origin:0 0;">RE</div>
<div class="t" style="left:310.3px;top:345.78px;font-size:9.0px;color:#4a4a4a;font-weight:normal;letter-spacing:0px;transform:scaleX(0.85);transform-origin:0 0;">10</div>
<div class="t" style="left:355.3px;top:345.78px;font-size:9.0px;color:#4a4a4a;font-weight:normal;letter-spacing:0px;transform:scaleX(0.85);transform-origin:0 0;">Sim</div>
<div class="t" style="right:665.0px;top:345.78px;font-size:9.0px;color:#4a4a4a;font-weight:normal;letter-spacing:0px;text-align:right;transform:scaleX(0.85);transform-origin:100% 0;">252987</div>
<div class="t" style="left:499.3px;top:345.78px;font-size:9.0px;color:#4a4a4a;font-weight:normal;letter-spacing:0px;transform:scaleX(0.85);transform-origin:0 0;">PP</div>
<div class="t" style="left:579.3px;top:345.78px;font-size:9.0px;color:#4a4a4a;font-weight:normal;letter-spacing:0px;transform:scaleX(0.85);transform-origin:0 0;">1358</div>
<div class="t" style="left:661.3px;top:345.78px;font-size:9.0px;color:#4a4a4a;font-weight:normal;letter-spacing:0px;transform:scaleX(0.85);transform-origin:0 0;">Camiseta Esporte Vintage Masculina Cinza</div>
<div class="t" style="left:823.3px;top:345.78px;font-size:9.0px;color:#4a4a4a;font-weight:normal;letter-spacing:0px;transform:scaleX(0.85);transform-origin:0 0;">524432156</div>
<div class="t" style="left:877.3px;top:345.78px;font-size:9.0px;color:#4a4a4a;font-weight:normal;letter-spacing:0px;transform:scaleX(0.85);transform-origin:0 0;">1358TGGGG</div>
<div class="t" style="right:107.0px;top:345.78px;font-size:9.0px;color:#4a4a4a;font-weight:normal;letter-spacing:0px;text-align:right;transform:scaleX(0.85);transform-origin:100% 0;">3</div>
<div class="t" style="left:1057.3px;top:345.78px;font-size:9.0px;color:#4a4a4a;font-weight:normal;letter-spacing:0px;transform:scaleX(0.85);transform-origin:0 0;">UN</div>
<div class="t" style="left:177.3px;top:367.78px;font-size:9.0px;color:#4a4a4a;font-weight:normal;letter-spacing:0px;transform:scaleX(0.85);transform-origin:0 0;">12142806</div>
<div class="t" style="left:237.3px;top:367.78px;font-size:9.0px;color:#4a4a4a;font-weight:normal;letter-spacing:0px;transform:scaleX(0.85);transform-origin:0 0;">13Q</div>
<div class="t" style="left:281.3px;top:367.78px;font-size:9.0px;color:#4a4a4a;font-weight:normal;letter-spacing:0px;transform:scaleX(0.85);transform-origin:0 0;">RE</div>
<div class="t" style="left:310.3px;top:367.78px;font-size:9.0px;color:#4a4a4a;font-weight:normal;letter-spacing:0px;transform:scaleX(0.85);transform-origin:0 0;">10</div>
<div class="t" style="left:355.3px;top:367.78px;font-size:9.0px;color:#4a4a4a;font-weight:normal;letter-spacing:0px;transform:scaleX(0.85);transform-origin:0 0;">Sim</div>
<div class="t" style="right:665.0px;top:367.78px;font-size:9.0px;color:#4a4a4a;font-weight:normal;letter-spacing:0px;text-align:right;transform:scaleX(0.85);transform-origin:100% 0;">252987</div>
<div class="t" style="left:499.3px;top:367.78px;font-size:9.0px;color:#4a4a4a;font-weight:normal;letter-spacing:0px;transform:scaleX(0.85);transform-origin:0 0;">PP</div>
<div class="t" style="left:579.3px;top:367.78px;font-size:9.0px;color:#4a4a4a;font-weight:normal;letter-spacing:0px;transform:scaleX(0.85);transform-origin:0 0;">1358</div>
<div class="t" style="left:661.3px;top:367.78px;font-size:9.0px;color:#4a4a4a;font-weight:normal;letter-spacing:0px;transform:scaleX(0.85);transform-origin:0 0;">Camiseta Esporte Vintage Masculina Cinza</div>
<div class="t" style="left:823.3px;top:367.78px;font-size:9.0px;color:#4a4a4a;font-weight:normal;letter-spacing:0px;transform:scaleX(0.85);transform-origin:0 0;">424432155</div>
<div class="t" style="left:877.3px;top:367.78px;font-size:9.0px;color:#4a4a4a;font-weight:normal;letter-spacing:0px;transform:scaleX(0.85);transform-origin:0 0;">1358TP</div>
<div class="t" style="right:107.0px;top:367.78px;font-size:9.0px;color:#4a4a4a;font-weight:normal;letter-spacing:0px;text-align:right;transform:scaleX(0.85);transform-origin:100% 0;">7</div>
<div class="t" style="left:1057.3px;top:367.78px;font-size:9.0px;color:#4a4a4a;font-weight:normal;letter-spacing:0px;transform:scaleX(0.85);transform-origin:0 0;">UN</div>
<div class="t" style="left:177.3px;top:388.78px;font-size:9.0px;color:#4a4a4a;font-weight:normal;letter-spacing:0px;transform:scaleX(0.85);transform-origin:0 0;">12142806</div>
<div class="t" style="left:237.3px;top:388.78px;font-size:9.0px;color:#4a4a4a;font-weight:normal;letter-spacing:0px;transform:scaleX(0.85);transform-origin:0 0;">13Q</div>
<div class="t" style="left:281.3px;top:388.78px;font-size:9.0px;color:#4a4a4a;font-weight:normal;letter-spacing:0px;transform:scaleX(0.85);transform-origin:0 0;">RE</div>
<div class="t" style="left:310.3px;top:388.78px;font-size:9.0px;color:#4a4a4a;font-weight:normal;letter-spacing:0px;transform:scaleX(0.85);transform-origin:0 0;">10</div>
<div class="t" style="left:355.3px;top:388.78px;font-size:9.0px;color:#4a4a4a;font-weight:normal;letter-spacing:0px;transform:scaleX(0.85);transform-origin:0 0;">Sim</div>
<div class="t" style="right:665.0px;top:388.78px;font-size:9.0px;color:#4a4a4a;font-weight:normal;letter-spacing:0px;text-align:right;transform:scaleX(0.85);transform-origin:100% 0;">252987</div>
<div class="t" style="left:499.3px;top:388.78px;font-size:9.0px;color:#4a4a4a;font-weight:normal;letter-spacing:0px;transform:scaleX(0.85);transform-origin:0 0;">PP</div>
<div class="t" style="left:579.3px;top:388.78px;font-size:9.0px;color:#4a4a4a;font-weight:normal;letter-spacing:0px;transform:scaleX(0.85);transform-origin:0 0;">1358</div>
<div class="t" style="left:661.3px;top:388.78px;font-size:9.0px;color:#4a4a4a;font-weight:normal;letter-spacing:0px;transform:scaleX(0.85);transform-origin:0 0;">Camiseta Esporte Vintage Masculina Cinza</div>
<div class="t" style="left:823.3px;top:388.78px;font-size:9.0px;color:#4a4a4a;font-weight:normal;letter-spacing:0px;transform:scaleX(0.85);transform-origin:0 0;">324432154</div>
<div class="t" style="left:877.3px;top:388.78px;font-size:9.0px;color:#4a4a4a;font-weight:normal;letter-spacing:0px;transform:scaleX(0.85);transform-origin:0 0;">1358TPP</div>
<div class="t" style="right:107.0px;top:388.78px;font-size:9.0px;color:#4a4a4a;font-weight:normal;letter-spacing:0px;text-align:right;transform:scaleX(0.85);transform-origin:100% 0;">4</div>
<div class="t" style="left:1057.3px;top:388.78px;font-size:9.0px;color:#4a4a4a;font-weight:normal;letter-spacing:0px;transform:scaleX(0.85);transform-origin:0 0;">UN</div>
<div class="t" style="left:177.3px;top:410.78px;font-size:9.0px;color:#4a4a4a;font-weight:normal;letter-spacing:0px;transform:scaleX(0.85);transform-origin:0 0;">12142806</div>
<div class="t" style="left:237.3px;top:410.78px;font-size:9.0px;color:#4a4a4a;font-weight:normal;letter-spacing:0px;transform:scaleX(0.85);transform-origin:0 0;">13Q</div>
<div class="t" style="left:281.3px;top:410.78px;font-size:9.0px;color:#4a4a4a;font-weight:normal;letter-spacing:0px;transform:scaleX(0.85);transform-origin:0 0;">RE</div>
<div class="t" style="left:310.3px;top:410.78px;font-size:9.0px;color:#4a4a4a;font-weight:normal;letter-spacing:0px;transform:scaleX(0.85);transform-origin:0 0;">10</div>
<div class="t" style="left:355.3px;top:410.78px;font-size:9.0px;color:#4a4a4a;font-weight:normal;letter-spacing:0px;transform:scaleX(0.85);transform-origin:0 0;">Sim</div>
<div class="t" style="right:665.0px;top:410.78px;font-size:9.0px;color:#4a4a4a;font-weight:normal;letter-spacing:0px;text-align:right;transform:scaleX(0.85);transform-origin:100% 0;">252987</div>
<div class="t" style="left:499.3px;top:410.78px;font-size:9.0px;color:#4a4a4a;font-weight:normal;letter-spacing:0px;transform:scaleX(0.85);transform-origin:0 0;">PP</div>
<div class="t" style="left:579.3px;top:410.78px;font-size:9.0px;color:#4a4a4a;font-weight:normal;letter-spacing:0px;transform:scaleX(0.85);transform-origin:0 0;">1358</div>
<div class="t" style="left:661.3px;top:410.78px;font-size:9.0px;color:#4a4a4a;font-weight:normal;letter-spacing:0px;transform:scaleX(0.85);transform-origin:0 0;">Camiseta Esporte Vintage Masculina Cinza</div>
<div class="t" style="left:823.3px;top:410.78px;font-size:9.0px;color:#4a4a4a;font-weight:normal;letter-spacing:0px;transform:scaleX(0.85);transform-origin:0 0;">224432153</div>
<div class="t" style="left:877.3px;top:410.78px;font-size:9.0px;color:#4a4a4a;font-weight:normal;letter-spacing:0px;transform:scaleX(0.85);transform-origin:0 0;">1358TM</div>
<div class="t" style="right:107.0px;top:410.78px;font-size:9.0px;color:#4a4a4a;font-weight:normal;letter-spacing:0px;text-align:right;transform:scaleX(0.85);transform-origin:100% 0;">5</div>
<div class="t" style="left:1057.3px;top:410.78px;font-size:9.0px;color:#4a4a4a;font-weight:normal;letter-spacing:0px;transform:scaleX(0.85);transform-origin:0 0;">UN</div>
<div class="t" style="left:177.3px;top:432.78px;font-size:9.0px;color:#4a4a4a;font-weight:normal;letter-spacing:0px;transform:scaleX(0.85);transform-origin:0 0;">12142806</div>
<div class="t" style="left:237.3px;top:432.78px;font-size:9.0px;color:#4a4a4a;font-weight:normal;letter-spacing:0px;transform:scaleX(0.85);transform-origin:0 0;">13Q</div>
<div class="t" style="left:281.3px;top:432.78px;font-size:9.0px;color:#4a4a4a;font-weight:normal;letter-spacing:0px;transform:scaleX(0.85);transform-origin:0 0;">RE</div>
<div class="t" style="left:310.3px;top:432.78px;font-size:9.0px;color:#4a4a4a;font-weight:normal;letter-spacing:0px;transform:scaleX(0.85);transform-origin:0 0;">10</div>
<div class="t" style="left:355.3px;top:432.78px;font-size:9.0px;color:#4a4a4a;font-weight:normal;letter-spacing:0px;transform:scaleX(0.85);transform-origin:0 0;">Sim</div>
<div class="t" style="right:665.0px;top:432.78px;font-size:9.0px;color:#4a4a4a;font-weight:normal;letter-spacing:0px;text-align:right;transform:scaleX(0.85);transform-origin:100% 0;">252987</div>
<div class="t" style="left:499.3px;top:432.78px;font-size:9.0px;color:#4a4a4a;font-weight:normal;letter-spacing:0px;transform:scaleX(0.85);transform-origin:0 0;">PP</div>
<div class="t" style="left:579.3px;top:432.78px;font-size:9.0px;color:#4a4a4a;font-weight:normal;letter-spacing:0px;transform:scaleX(0.85);transform-origin:0 0;">1358</div>
<div class="t" style="left:661.3px;top:432.78px;font-size:9.0px;color:#4a4a4a;font-weight:normal;letter-spacing:0px;transform:scaleX(0.85);transform-origin:0 0;">Camiseta Esporte Vintage Masculina Cinza</div>
<div class="t" style="left:823.3px;top:432.78px;font-size:9.0px;color:#4a4a4a;font-weight:normal;letter-spacing:0px;transform:scaleX(0.85);transform-origin:0 0;">124432152</div>
<div class="t" style="left:877.3px;top:432.78px;font-size:9.0px;color:#4a4a4a;font-weight:normal;letter-spacing:0px;transform:scaleX(0.85);transform-origin:0 0;">1358TGGG</div>
<div class="t" style="right:107.0px;top:432.78px;font-size:9.0px;color:#4a4a4a;font-weight:normal;letter-spacing:0px;text-align:right;transform:scaleX(0.85);transform-origin:100% 0;">6</div>
<div class="t" style="left:1057.3px;top:432.78px;font-size:9.0px;color:#4a4a4a;font-weight:normal;letter-spacing:0px;transform:scaleX(0.85);transform-origin:0 0;">UN</div>
<div class="t" style="right:107.0px;top:454.78px;font-size:9.0px;color:#333;font-weight:bold;letter-spacing:0px;text-align:right;transform:scaleX(0.85);transform-origin:100% 0;">75</div>
<div class="a" style="left:350px;top:164px;width:790px;height:108.5px;border:2px solid #ec7224"></div>
<div class="a" style="left:350px;top:276px;width:790px;height:172.5px;border:2px solid #13a54a"></div>
<div class="a" style="left:0px;top:471px;width:1148px;height:4px;background:#fff"></div>
</body></html>
